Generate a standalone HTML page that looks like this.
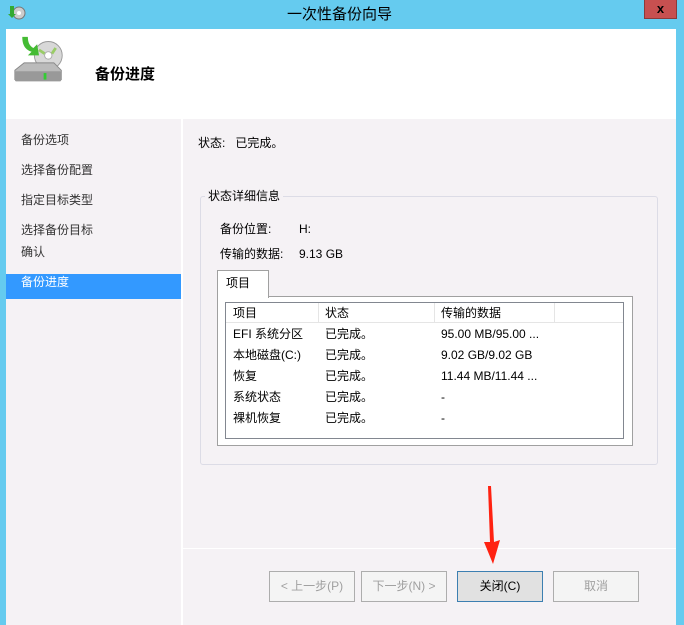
<!DOCTYPE html>
<html><head><meta charset="utf-8"><style>
*{margin:0;padding:0;box-sizing:border-box}
body{width:684px;height:625px;background:#65cbef;font-family:"Liberation Sans","Noto Sans CJK SC","WenQuanYi Zen Hei",sans-serif;font-size:12px;color:#000;position:relative;overflow:hidden}
.a{position:absolute}
.t{position:absolute;white-space:nowrap;line-height:14px}
.btn{position:absolute;top:571px;width:86px;height:31px;border:1px solid #adadad;background:#f4f4f4;color:#a0a0a0;text-align:center;line-height:29px;font-size:12px}
</style></head><body>
<div class="t" style="left:287px;top:7px;font-size:15px;line-height:16px;color:#000">一次性备份向导</div>
<div class="a" style="left:644px;top:0;width:33px;height:19px;background:#c75050;border:1px solid #8c3a3a;border-top:none;color:#000;font-weight:bold;text-align:center;line-height:17px;font-size:13px">x</div>
<svg class="a" style="left:7px;top:4px" width="20" height="18"><ellipse cx="12" cy="9" rx="6" ry="6" fill="#ccc" stroke="#777"/><circle cx="12" cy="9" r="2" fill="#fff"/><path d="M3 2v8h-2l4 4 4-4h-2V2z" fill="#3a3"/></svg>
<div class="a" style="left:6px;top:29px;width:670px;height:596px;background:#fff"></div>
<svg class="a" style="left:13px;top:36px" width="52" height="50" viewBox="0 0 56 52">
<circle cx="38" cy="20" r="15" fill="#d8d8d8" stroke="#999"/><circle cx="38" cy="20" r="4" fill="#fff" stroke="#aaa"/><path d="M28 14l6 4M46 12l-4 6" stroke="#9c6" stroke-width="3"/>
<path d="M2 36l10-8h32l8 8v10H2z" fill="#bbb" stroke="#888"/><rect x="2" y="37" width="50" height="11" rx="2" fill="#999"/><rect x="33" y="39" width="3" height="7" fill="#3c3"/>
<path d="M10 0c0 10 4 14 10 16l-4 4 12 0-2-12-4 4c-4-2-6-6-6-12z" fill="#4b3"/></svg>
<div class="t" style="left:95px;top:66px;font-size:15px;font-weight:bold;line-height:17px">备份进度</div>
<div class="a" style="left:6px;top:119px;width:175px;height:506px;background:#f5f2f5"></div>
<div class="a" style="left:183px;top:119px;width:493px;height:506px;background:#f5f2f5"></div>
<div class="t" style="left:21px;top:133px;color:#333">备份选项</div>
<div class="t" style="left:21px;top:163px;color:#333">选择备份配置</div>
<div class="t" style="left:21px;top:193px;color:#333">指定目标类型</div>
<div class="t" style="left:21px;top:223px;color:#333">选择备份目标</div>
<div class="t" style="left:21px;top:245px;color:#333">确认</div>
<div class="a" style="left:6px;top:274px;width:175px;height:25px;background:#3399ff"></div>
<div class="t" style="left:21px;top:275px;color:#fff">备份进度</div>
<div class="t" style="left:198px;top:136px">状态:&nbsp;&nbsp;&nbsp;已完成。</div>
<div class="a" style="left:200px;top:196px;width:458px;height:269px;border:1px solid #dcdce6;border-radius:3px"></div>
<div class="t" style="left:205px;top:189px;background:#f5f2f5;padding:0 3px">状态详细信息</div>
<div class="t" style="left:220px;top:222px">备份位置:</div><div class="t" style="left:299px;top:222px">H:</div>
<div class="t" style="left:220px;top:247px">传输的数据:</div><div class="t" style="left:299px;top:247px">9.13 GB</div>
<div class="a" style="left:217px;top:296px;width:416px;height:150px;border:1px solid #a0a0a0;background:#fff"></div>
<div class="a" style="left:217px;top:270px;width:52px;height:28px;border:1px solid #a0a0a0;border-bottom:none;background:#fff"></div>
<div class="t" style="left:226px;top:276px">项目</div>
<div class="a" style="left:225px;top:302px;width:399px;height:137px;border:1px solid #828790;background:#fff"></div>
<div class="a" style="left:226px;top:303px;width:397px;height:20px;border-bottom:1px solid #e5e5e5"></div>
<div class="a" style="left:318px;top:303px;width:1px;height:20px;background:#e5e5e5"></div>
<div class="a" style="left:434px;top:303px;width:1px;height:20px;background:#e5e5e5"></div>
<div class="a" style="left:554px;top:303px;width:1px;height:20px;background:#e5e5e5"></div>
<div class="t" style="left:233px;top:306px">项目</div><div class="t" style="left:325px;top:306px">状态</div><div class="t" style="left:441px;top:306px">传输的数据</div>
<div class="t" style="left:233px;top:327px">EFI 系统分区</div><div class="t" style="left:325px;top:327px">已完成。</div><div class="t" style="left:441px;top:327px">95.00 MB/95.00 ...</div>
<div class="t" style="left:233px;top:348px">本地磁盘(C:)</div><div class="t" style="left:325px;top:348px">已完成。</div><div class="t" style="left:441px;top:348px">9.02 GB/9.02 GB</div>
<div class="t" style="left:233px;top:369px">恢复</div><div class="t" style="left:325px;top:369px">已完成。</div><div class="t" style="left:441px;top:369px">11.44 MB/11.44 ...</div>
<div class="t" style="left:233px;top:390px">系统状态</div><div class="t" style="left:325px;top:390px">已完成。</div><div class="t" style="left:441px;top:390px">-</div>
<div class="t" style="left:233px;top:411px">裸机恢复</div><div class="t" style="left:325px;top:411px">已完成。</div><div class="t" style="left:441px;top:411px">-</div>
<div class="a" style="left:183px;top:548px;width:493px;height:1px;background:#fff"></div>
<div class="btn" style="left:269px">&lt; 上一步(P)</div>
<div class="btn" style="left:361px">下一步(N) &gt;</div>
<div class="btn" style="left:457px;background:#e1e1e1;border-color:#3c7fb1;color:#000">关闭(C)</div>
<div class="btn" style="left:553px">取消</div>
<svg class="a" style="left:480px;top:484px" width="24" height="82"><path d="M8 2L11 2L14 58L20 56L13 80L4 58L10 58Z" fill="#f21"/></svg>
</body></html>
